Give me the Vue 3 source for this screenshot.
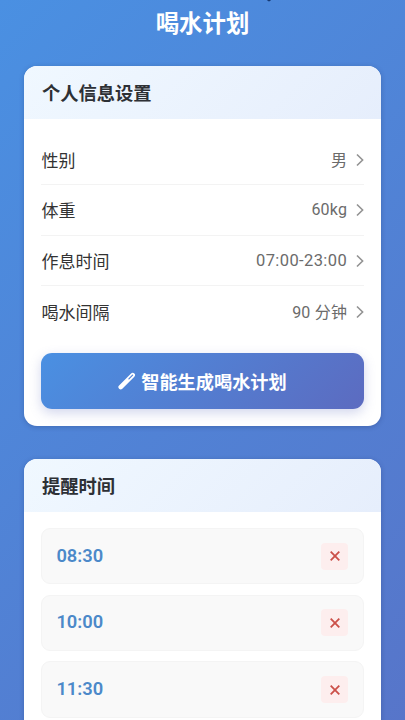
<script setup>
const settings = [
  { label: '性别', value: '男' },
  { label: '体重', value: '60kg' },
  { label: '作息时间', value: '07:00-23:00', wide: true },
  { label: '喝水间隔', value: '90 分钟' },
]
const reminders = ['08:30', '10:00', '11:30']
</script>

<template>
  <main class="page">
    <svg class="speck" width="4" height="2" viewBox="0 0 4 2"><path d="M0 0H4L2.8 1.3H1.2Z" fill="#173a73" /></svg>
    <h1 class="title">喝水计划</h1>

    <section class="card">
      <h2 class="card-head">个人信息设置</h2>
      <div class="settings">
        <div v-for="item in settings" :key="item.label" class="row">
          <span class="label">{{ item.label }}</span>
          <span class="value" :class="{ wide: item.wide }">{{ item.value }}</span>
          <svg class="chevron" width="8" height="14" viewBox="0 0 8 14">
            <path d="M1 1.5 6.6 7 1 12.5" fill="none" stroke="#929292" stroke-width="1.6" />
          </svg>
        </div>
        <button class="generate">
          <svg class="wand" width="18" height="18" viewBox="0 0 18 18">
            <path d="M2.7 15.1 14.7 3.1" stroke="#fff" stroke-width="4.6" stroke-linecap="round" />
            <path d="M10.9 6.9 14.6 3.2" stroke="#5182d7" stroke-width="1.2" stroke-linecap="round" />
          </svg>
          <span>智能生成喝水计划</span>
        </button>
      </div>
    </section>

    <section class="card">
      <h2 class="card-head">提醒时间</h2>
      <div class="reminders">
        <div v-for="time in reminders" :key="time" class="reminder">
          <span class="time">{{ time }}</span>
          <button class="remove" aria-label="删除">
            <svg width="10" height="10" viewBox="0 0 10 10">
              <path d="M.7.7 9.3 9.3M9.3.7.7 9.3" stroke="#cb5049" stroke-width="1.8" />
            </svg>
          </button>
        </div>
      </div>
    </section>
  </main>
</template>

<style>
body {
  margin: 0;
}
</style>

<style scoped>
.page {
  position: relative;
  box-sizing: border-box;
  height: 720px;
  overflow: hidden;
  padding: 7px 24.4px 0;
  background: linear-gradient(135deg, #4a90e2 0%, #5c6bc0 138%);
  font-family: Roboto, "Noto Sans CJK SC", sans-serif;
  color: #333;
}
.speck {
  position: absolute;
  top: 0;
  left: 267px;
}
.title {
  margin: 0 0 25px;
  height: 34px;
  line-height: 34px;
  text-align: center;
  font-size: 23.4px;
  font-weight: 700;
  color: #fff;
}
.card {
  margin-bottom: 32.4px;
  border-radius: 13px;
  overflow: hidden;
  background: #fff;
  box-shadow: 0 1px 5px rgba(30, 50, 100, 0.3);
}
.card-head {
  box-sizing: border-box;
  margin: 0;
  height: 53.3px;
  padding-left: 17.5px;
  line-height: 55px;
  font-size: 18.3px;
  font-weight: 700;
  color: #2d3035;
  background: linear-gradient(135deg, #f0f8ff, #e6eefc);
}
.settings {
  padding: 15.7px 17px 17.5px;
}
.row {
  display: flex;
  align-items: center;
  box-sizing: border-box;
  height: 50.5px;
  border-bottom: 1px solid #f3f3f3;
}
.row:nth-child(4) {
  border-bottom: none;
}
.label {
  flex: 1;
  padding-bottom: 1px;
  font-size: 17px;
}
.value {
  margin-right: 8.5px;
  padding-bottom: 1px;
  font-size: 16px;
  letter-spacing: 0.2px;
  color: #6b6b6b;
}
.wide {
  padding-bottom: 0;
  font-size: 16.5px;
  letter-spacing: 0.4px;
}
.generate {
  display: flex;
  align-items: center;
  justify-content: center;
  gap: 5px;
  width: 100%;
  height: 56px;
  margin-top: 16px;
  padding: 0;
  border: 0;
  border-radius: 11px;
  background: linear-gradient(135deg, #4a90e2, #5c6bc0);
  box-shadow: 0 4px 12px rgba(92, 107, 192, 0.28);
  font-family: inherit;
  font-size: 18.2px;
  font-weight: 700;
  color: #fff;
}
.reminders {
  display: flex;
  flex-direction: column;
  gap: 10.2px;
  padding: 15.7px 17px;
}
.reminder {
  display: flex;
  align-items: center;
  justify-content: space-between;
  box-sizing: border-box;
  height: 56.6px;
  padding: 0 14.5px 0 14px;
  border: 1px solid #f4f4f4;
  border-radius: 9px;
  background: #f9f9f9;
}
.time {
  padding-bottom: 2px;
  font-size: 18.3px;
  font-weight: 600;
  color: #4c89c9;
}
.remove {
  display: flex;
  align-items: center;
  justify-content: center;
  width: 27px;
  height: 27px;
  padding: 0;
  border: 0;
  border-radius: 4px;
  background: #fdeeee;
}
</style>
